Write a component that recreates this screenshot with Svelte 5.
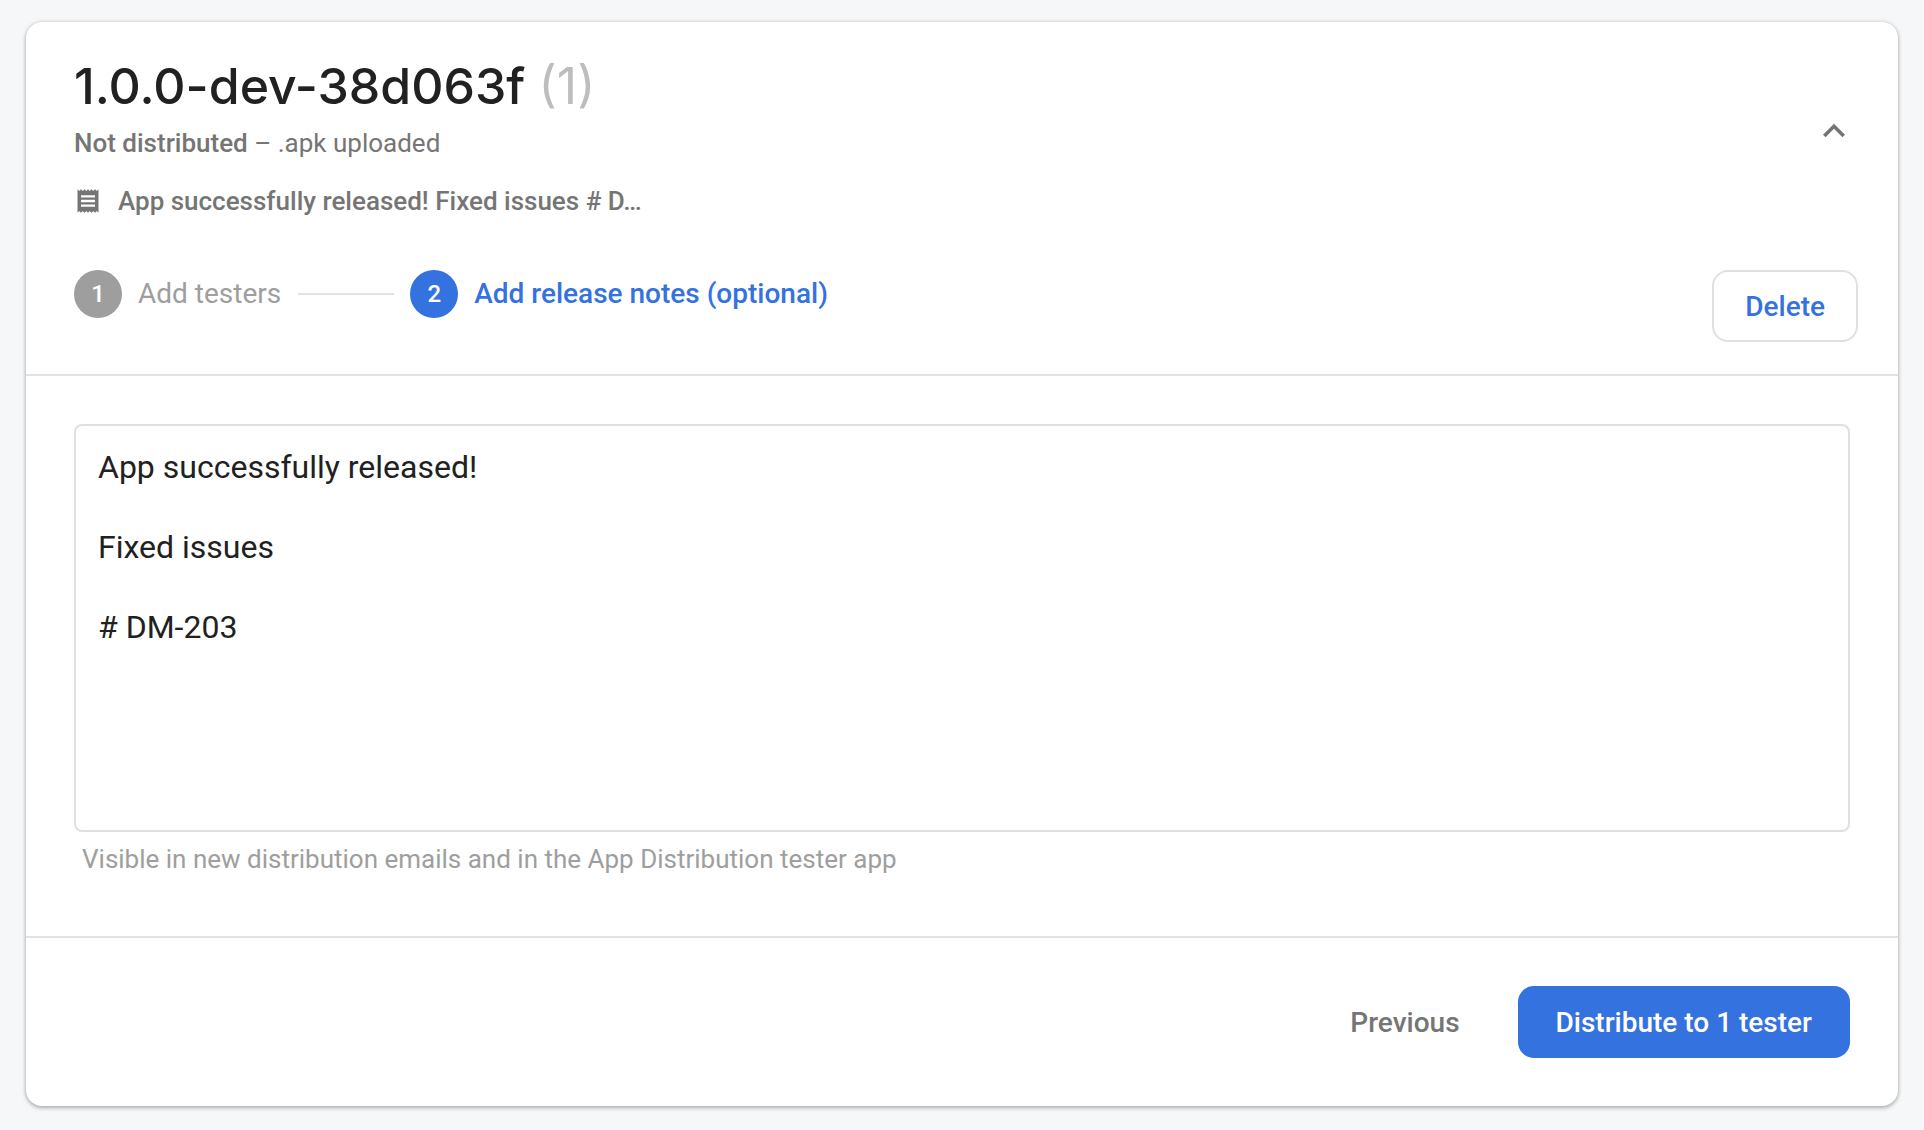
<script>
  const version = '1.0.0-dev-38d063f';
  const build = 1;
  const testers = 1;
  const summaryLength = 43;
  let notes = $state('App successfully released!\n\nFixed issues\n\n# DM-203');
  let flat = $derived(notes.replace(/\s+/g, ' '));
  let summary = $derived(flat.length > summaryLength ? flat.slice(0, summaryLength) + '…' : flat);
  const steps = [
    { n: 1, label: 'Add testers', active: false },
    { n: 2, label: 'Add release notes (optional)', active: true }
  ];
</script>

<main class="page">
  <section class="card">
    <header class="head">
      <div class="summary">
        <div class="info">
          <h1>{version} <span class="build">({build})</span></h1>
          <p class="status"><strong>Not distributed</strong> – .apk uploaded</p>
          <div class="snippet">
            <svg class="receipt" viewBox="0 0 24 24" aria-hidden="true">
              <path d="M18 17H6v-2h12v2zm0-4H6v-2h12v2zm0-4H6V7h12v2zM3 22l1.5-1.5L6 22l1.5-1.5L9 22l1.5-1.5L12 22l1.5-1.5L15 22l1.5-1.5L18 22l1.5-1.5L21 22V2l-1.500 1.500L18 2l-1.500 1.500L15 2l-1.500 1.500L12 2l-1.500 1.500L9 2 7.500 3.500 6 2 4.500 3.500 3 2v20z" />
            </svg>
            <span>{summary}</span>
          </div>
        </div>
        <button class="toggle" type="button" aria-label="Collapse release">
          <svg viewBox="0 0 24 24" aria-hidden="true">
            <path d="M12 8l-6 6 1.410 1.410L12 10.830l4.590 4.580L18 14z" />
          </svg>
        </button>
      </div>
      <div class="actions">
        <ol class="steps">
          {#each steps as step}
            <li class="step" class:active={step.active}>
              <span class="dot">{step.n}</span>
              <span class="label">{step.label}</span>
            </li>
          {/each}
        </ol>
        <button class="btn outlined" type="button">Delete</button>
      </div>
    </header>

    <div class="body">
      <textarea aria-label="Release notes" aria-describedby="notes-hint" spellcheck="false" bind:value={notes}></textarea>
      <p class="hint" id="notes-hint">Visible in new distribution emails and in the App Distribution tester app</p>
    </div>

    <footer class="foot">
      <button class="btn plain" type="button">Previous</button>
      <button class="btn primary" type="button">Distribute to {testers} tester</button>
    </footer>
  </section>
</main>

<style>
  :global(body) {
    background: #f5f7f9;
    font-family: Roboto, sans-serif;
    color: #212121;
  }
  .page {
    padding: 22px 26px 24px;
  }
  .card {
    background: #fff;
    border-radius: 16px;
    box-shadow: 0 2px 4px rgba(0, 0, 0, 0.26), 0 0 4px rgba(0, 0, 0, 0.14);
  }
  h1,
  p,
  ol {
    margin: 0;
    padding: 0;
  }
  .head {
    padding: 34px 40px 32px 48px;
    border-bottom: 2px solid #e3e3e3;
  }
  .summary {
    display: flex;
    align-items: center;
    justify-content: space-between;
  }
  h1 {
    font-family: Inter, sans-serif;
    font-size: 50px;
    line-height: 60px;
    font-weight: 500;
  }
  .build {
    color: #bdbdbd;
    font-weight: 400;
  }
  .status {
    margin-top: 9px;
    font-size: 26px;
    line-height: 36px;
    color: #757575;
  }
  .status strong {
    font-weight: 500;
  }
  .snippet {
    display: flex;
    align-items: center;
    gap: 16px;
    margin-top: 20px;
    color: #757575;
    font-size: 26px;
    line-height: 40px;
    font-weight: 500;
    white-space: nowrap;
  }
  .receipt {
    width: 28px;
    height: 28px;
    flex: none;
    fill: #757575;
  }
  button {
    font: inherit;
    border: 0;
    background: none;
    cursor: pointer;
  }
  .toggle {
    margin-right: 2px;
    padding: 0 0 16px;
  }
  .toggle svg {
    display: block;
    width: 44px;
    height: 44px;
    fill: #757575;
  }
  .actions {
    display: flex;
    align-items: flex-start;
    justify-content: space-between;
    margin-top: 49px;
  }
  .steps {
    display: flex;
    list-style: none;
  }
  .step {
    display: flex;
    align-items: center;
    gap: 16px;
    font-size: 28px;
    line-height: 48px;
    color: #9e9e9e;
  }
  .step + .step::before {
    content: '';
    width: 96px;
    height: 2px;
    margin-left: 17px;
    background: #e3e3e3;
  }
  .dot {
    width: 48px;
    height: 48px;
    border-radius: 50%;
    background: #9e9e9e;
    color: #fff;
    font-size: 24px;
    font-weight: 500;
    text-align: center;
  }
  .active {
    color: #3372df;
    font-weight: 500;
  }
  .active .dot {
    background: #3372df;
  }
  .btn {
    height: 72px;
    padding: 0 38px;
    border-radius: 16px;
    font-size: 28px;
    font-weight: 500;
  }
  .outlined {
    padding: 0 31px;
    border: 2px solid #e0e0e0;
    color: #3372df;
  }
  .plain {
    color: #757575;
  }
  .primary {
    background: #3372df;
    color: #fff;
  }
  .body {
    padding: 48px 48px 57px;
    border-bottom: 2px solid #e3e3e3;
  }
  textarea {
    display: block;
    box-sizing: border-box;
    width: 100%;
    height: 408px;
    padding: 21px 22px;
    border: 2px solid #e0e0e0;
    border-radius: 8px;
    background: #fff;
    color: #212121;
    font: 400 32px/40px Roboto, sans-serif;
    resize: none;
    outline: none;
  }
  .hint {
    margin-top: 7px;
    padding: 0 8px;
    font-size: 26px;
    line-height: 40px;
    color: #9e9e9e;
  }
  .foot {
    display: flex;
    justify-content: flex-end;
    gap: 20px;
    padding: 48px;
  }
</style>
